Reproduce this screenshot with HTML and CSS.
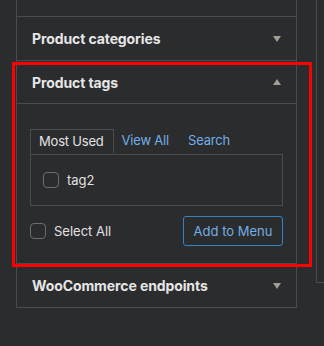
FILE: index.html
```html
<!DOCTYPE html>
<html lang="en">
<head>
    <meta charset="UTF-8">
    <title>Menu items</title>
    <link rel="stylesheet" href="styles.css">
</head>
<body>
    <div class="page">
        <div class="accordion">
            <div class="section">
                <div class="section-head">
                    <span>Brands</span>
                    <span class="arrow down"></span>
                </div>
            </div>
            <div class="section">
                <div class="section-head">
                    <span>Product categories</span>
                    <span class="arrow down"></span>
                </div>
            </div>
            <div class="section open">
                <div class="section-head">
                    <span>Product tags</span>
                    <span class="arrow up"></span>
                </div>
                <div class="section-body">
                    <ul class="tabs">
                        <li class="current">Most Used</li>
                        <li>View All</li>
                        <li>Search</li>
                    </ul>
                    <div class="tab-panel">
                        <label class="check"><span class="box"></span>tag2</label>
                    </div>
                    <div class="actions">
                        <label class="check select-all"><span class="box"></span>Select All</label>
                        <button class="add-btn">Add to Menu</button>
                    </div>
                </div>
                <div class="highlight"></div>
            </div>
            <div class="section">
                <div class="section-head">
                    <span>WooCommerce endpoints</span>
                    <span class="arrow down"></span>
                </div>
            </div>
        </div>
        <div class="side"></div>
    </div>
</body>
</html>
```

FILE: styles.css
```css
* {
    margin: 0;
    padding: 0;
    box-sizing: border-box;
}
body {
    background: #2b2c2e;
    font-family: Inter, "Noto Sans", "Liberation Sans", sans-serif;
    color: #e2e2e2;
    overflow: hidden;
}
.page {
    display: flex;
    align-items: flex-start;
    margin-top: -27px;
}
.accordion {
    flex: none;
    width: 281px;
    margin-left: 16px;
    border: 1px solid #4b4c4f;
    border-top: 0;
    background: #2b2c2e;
}
.section {
    position: relative;
    border-bottom: 1px solid #4b4c4f;
}
.section:last-child {
    border-bottom: 0;
}
.section-head {
    height: 43px;
    display: flex;
    align-items: center;
    justify-content: space-between;
    padding: 0 15px 0 15px;
    font-size: 14px;
    font-weight: 700;
    letter-spacing: -0.1px;
    color: #e6e6e6;
}
.open .section-head {
    border-bottom: 1px solid #4b4c4f;
}
.arrow {
    width: 0;
    height: 0;
    border-left: 4px solid transparent;
    border-right: 4px solid transparent;
}
.arrow.down {
    border-top: 6px solid #a39d93;
}
.arrow.up {
    border-bottom: 6px solid #a39d93;
}
.section-body {
    padding: 25px 13px 17px 13px;
}
.tabs {
    list-style: none;
    display: flex;
    font-size: 13px;
    letter-spacing: -0.2px;
    height: 25px;
}
.tabs li {
    padding: 0 9px 0 8px;
    line-height: 23px;
    color: #72aee6;
    margin-right: 2px;
}
.tabs li.current {
    color: #e2e2e2;
    border: 1px solid #4b4c4f;
    border-bottom: 1px solid #2b2c2e;
    margin-right: 0;
    position: relative;
    z-index: 1;
}
.tab-panel {
    height: 52px;
    border: 1px solid #4b4c4f;
    padding: 17px 0 0 12px;
}
.check {
    display: flex;
    align-items: center;
    font-size: 13px;
    color: #e2e2e2;
}
.box {
    width: 16px;
    height: 16px;
    border: 1px solid #6c6d70;
    border-radius: 4px;
    margin-right: 8px;
}
.select-all .box {
    margin-right: 8px;
}
.actions {
    display: flex;
    justify-content: space-between;
    align-items: center;
    margin-top: 10px;
}
.add-btn {
    width: 100px;
    height: 30px;
    border: 1px solid #3582c4;
    border-radius: 3px;
    background: transparent;
    color: #72aee6;
    font-family: inherit;
    font-size: 13px;
}
.highlight {
    position: absolute;
    left: -5px;
    right: -16px;
    top: 1px;
    bottom: -4px;
    border: 3px solid #ff0000;
    pointer-events: none;
}
.side {
    flex: none;
    width: 20px;
    height: 310px;
    margin-left: 19px;
    border: 1px solid #4b4c4f;
    border-right: 0;
}
```
